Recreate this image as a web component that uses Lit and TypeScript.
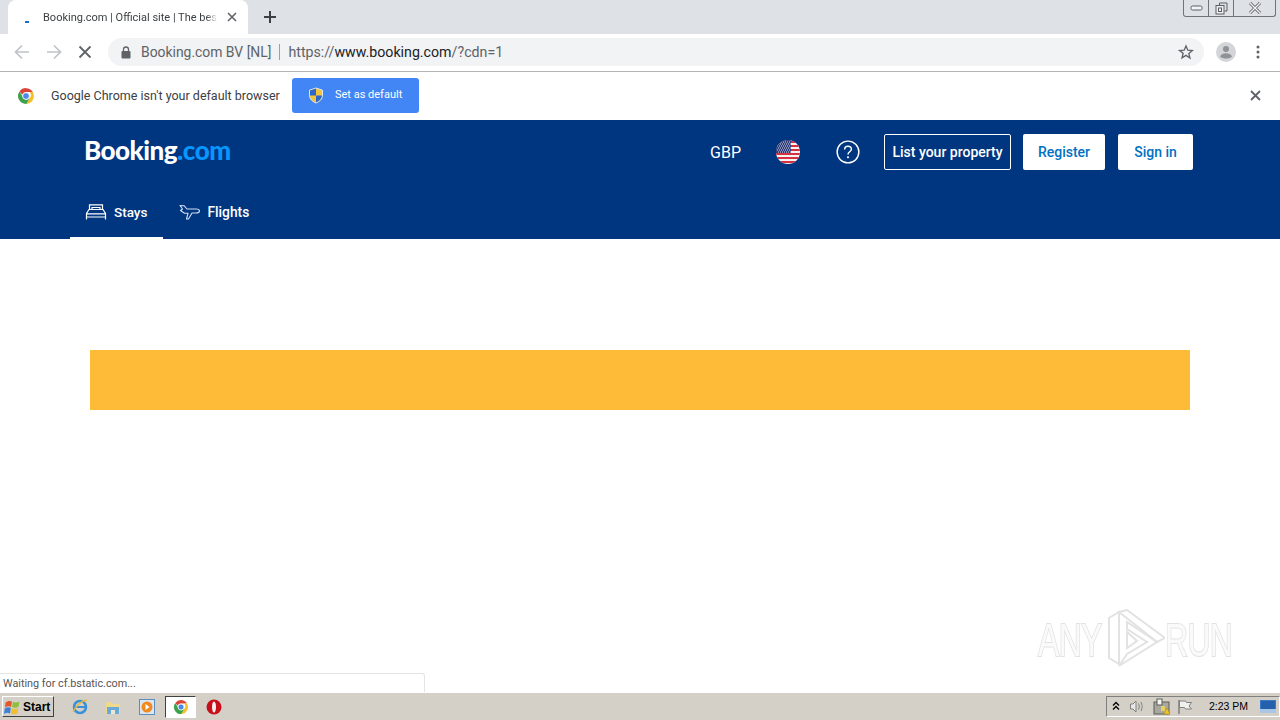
import { LitElement, html, css, svg } from "lit";
import { customElement } from "lit/decorators.js";

const chrome = (s: number) => html`<svg width=${s} height=${s} viewBox="0 0 48 48">
  <path d="M24 3a21 21 0 0 1 18.200 10.500H24a10.500 10.500 0 0 0-10 7L6.800 11.800A21 21 0 0 1 24 3z" fill="#db4437"/>
  <path d="M42.200 13.500A21 21 0 0 1 25 45l9-15.500a10.500 10.500 0 0 0-1-16z" fill="#f6c02c"/>
  <path d="M25 45A21 21 0 0 1 6.800 11.800l9 15.500A10.500 10.500 0 0 0 34 29.500z" fill="#3fa14a"/>
  <circle cx="24" cy="24" r="9" fill="#4a89e8" stroke="#f4f4f4" stroke-width="2.500"/>
</svg>`;

const stars: [number, number][] = [];
for (let y = 1.5; y < 12; y += 2) {
  for (let x = 1 + ((y - 1.5) / 2) % 2; x < 15; x += 2) stars.push([x, y]);
}

@customElement("app-root")
export class AppRoot extends LitElement {
  static styles = css`
    :host { display: block; width: 1280px; height: 720px; position: relative; overflow: hidden; background: #fff; font-family: Roboto, "Noto Sans", sans-serif; }
    .page { display: flex; flex-direction: column; height: 720px; }
    .tabstrip { height: 34px; background: #dee1e6; display: flex; position: relative; flex: none; padding-left: 8px; box-sizing: border-box; }
    .tab { width: 240px; height: 34px; background: #fff; border-radius: 8px 8px 0 0; display: flex; align-items: center; box-sizing: border-box; padding-left: 17px; position: relative; }
    .fav { width: 4px; height: 2px; background: #1a6fc0; margin-top: 9px; margin-right: 14px; flex: none; }
    .tabtitle { font-size: 11px; color: #3c4043; white-space: nowrap; width: 175px; line-height: 16px; margin-top: 2px; -webkit-mask-image: linear-gradient(to right, #000 163px, transparent 175px); mask-image: linear-gradient(to right, #000 163px, transparent 175px); }
    .tabclose { position: absolute; left: 219px; top: 12px; display: block; }
    .plus { margin: 10px 0 0 15px; display: block; }
    .winbtns { position: absolute; right: 4px; top: 0; width: 93px; height: 17px; box-sizing: border-box; border: 1px solid #6f7479; border-top: none; border-radius: 0 0 3px 3px; display: flex; }
    .winbtns > div { display: flex; align-items: center; justify-content: center; box-sizing: border-box; }
    .wb1 { width: 25px; border-right: 1px solid #6f7479; }
    .wb2 { width: 25px; border-right: 1px solid #6f7479; }
    .wb3 { flex: 1; }
    .toolbar { height: 38px; background: #fff; border-bottom: 1px solid #b4b4b4; padding-bottom: 1px; flex: none; display: flex; align-items: center; position: relative; box-sizing: border-box; }
    .navs { display: flex; align-items: center; width: 108px; padding-left: 13px; box-sizing: border-box; gap: 14px; flex: none; }
    .omni { width: 1096px; height: 28px; background: #f1f3f4; border-radius: 14px; display: flex; align-items: center; box-sizing: border-box; padding-left: 13px; position: relative; flex: none; font-size: 14.2px; color: #5f6368; white-space: nowrap; }
    .omni .org { margin-left: 10px; font-size: 13.9px; }
    .sep { width: 1px; height: 16px; background: #9aa0a6; margin: 0 8px; }
    .omni b { font-weight: 400; color: #202124; }
    .star { position: absolute; right: 10px; top: 6px; }
    .avatar { margin-left: 12px; display: block; flex: none; }
    .dots { margin-left: 20px; display: block; flex: none; }
    .infobar { height: 48px; background: #fff; flex: none; display: flex; align-items: center; padding-left: 17px; box-sizing: border-box; position: relative; font-size: 12.5px; color: #3c4043; }
    .infotext { margin-left: 16px; margin-bottom: 2px; white-space: nowrap; width: 241px; }
    .setdefault { width: 127px; height: 35px; background: #4285f4; border-radius: 3px; display: flex; align-items: center; box-sizing: border-box; padding-left: 16px; color: #fff; font-size: 11px; margin-bottom: 1px; gap: 11px; }
    .setdefault span { margin-bottom: 2px; }
    .infoclose { position: absolute; right: 19px; top: 18px; display: block; }
    .bk { height: 119px; background: #003580; flex: none; box-sizing: border-box; padding: 0 87px 0 70px; display: flex; flex-direction: column; }
    .bktop { height: 64px; display: flex; align-items: center; flex: none; }
    .logo { margin-left: 14px; font-family: "Lato", sans-serif; font-size: 26px; font-weight: 900; color: #fff; letter-spacing: -0.5px; margin-top: -4px; line-height: 30px; }
    .logo span { color: #0896ff; }
    .spacer { flex: 1; }
    .gbp { color: #fff; font-size: 16px; margin-right: 35px; }
    .flag { display: block; margin-right: 36px; }
    .help { display: block; margin-right: 24px; }
    .btn { height: 36px; box-sizing: border-box; display: flex; align-items: center; justify-content: center; font-size: 14px; font-weight: 500; border-radius: 2px; }
    .list { width: 127px; border: 1px solid #fff; color: #fff; margin-right: 12px; }
    .reg { width: 82px; background: #fff; color: #0071c2; margin-right: 13px; }
    .sign { width: 75px; background: #fff; color: #0071c2; }
    .bknav { display: flex; height: 55px; flex: none; }
    .navitem { display: flex; align-items: center; color: #fff; font-size: 13.8px; font-weight: 500; height: 55px; box-sizing: border-box; padding: 3px 15px 0 16px; gap: 7px; border-bottom: 2px solid transparent; }
    .navitem.active { border-bottom-color: #fff; font-size: 13.5px; padding: 3px 16px 0 15px; }
    .main { flex: 1; background: #fff; box-sizing: border-box; padding: 111px 90px 0; }
    .band { height: 60px; background: #febb38; }
    .taskbar { height: 28px; background: #d4d0c8; border-top: 1px solid #fff; box-sizing: border-box; flex: none; display: flex; align-items: center; position: relative; font-family: "Liberation Sans", sans-serif; }
    .start { width: 52px; height: 21px; margin-left: 2px; box-sizing: border-box; border: 1px solid; border-color: #fff #404040 #404040 #fff; display: flex; align-items: center; gap: 2px; padding-left: 1px; font-weight: 700; font-size: 12px; color: #000; background: #d4d0c8; }
    .tb { display: flex; align-items: center; justify-content: center; flex: none; }
    .tb-ie { margin-left: 17px; }
    .tb-folder { margin-left: 16px; }
    .tb-media { margin-left: 18px; }
    .tb-chrome { margin-left: 10px; width: 31px; height: 22px; background: #fff; border: 1px solid; border-color: #404040 #fff #fff #404040; box-sizing: border-box; }
    .tb-opera { margin-left: 10px; }
    .tray { position: absolute; right: 0; top: 3px; width: 174px; height: 21px; border: 1px solid; border-color: #808080 #fff #fff #808080; box-sizing: border-box; display: flex; align-items: center; font-size: 10.5px; color: #000; }
    .clock { position: absolute; left: 102px; top: 3px; }
    .tray svg { position: absolute; }
    .status { position: absolute; left: 0; top: 673px; width: 425px; height: 19px; background: #fff; border: 1px solid #e4e4e4; border-left: none; border-bottom: none; box-sizing: border-box; border-top-right-radius: 3px; font-size: 10.8px; color: #555; padding: 3px 0 0 3px; white-space: nowrap; }
    .wm { position: absolute; left: 1038px; top: 608px; display: flex; align-items: center; color: #fafafa; font-family: "Liberation Sans", sans-serif; font-size: 47px; line-height: 64px; letter-spacing: -1px; -webkit-text-stroke: 2px #e2e2e2; paint-order: stroke fill; }
    .wm span { display: block; transform: scaleX(0.68); transform-origin: left center; white-space: nowrap; }
    .wm .a { width: 67px; }
    .wm .r { width: 67px; }
    .wm svg { display: block; }
  `;

  render() {
    return html`
      <div class="page">
        <div class="tabstrip">
          <div class="tab">
            <div class="fav"></div>
            <div class="tabtitle">Booking.com | Official site | The best</div>
            <svg class="tabclose" width="10" height="10" viewBox="0 0 10 10"><path d="M1 1l8 8M9 1l-8 8" stroke="#5f6368" stroke-width="1.6"/></svg>
          </div>
          <svg class="plus" width="14" height="14" viewBox="0 0 14 14"><path d="M7 1v12M1 7h12" stroke="#3c4043" stroke-width="2"/></svg>
          <div class="winbtns">
            <div class="wb1"><svg width="13" height="6" viewBox="0 0 13 6"><rect x="1" y="1" width="11" height="4" rx="1.5" fill="#f4f5f6" stroke="#5a5e63"/></svg></div>
            <div class="wb2"><svg width="13" height="13" viewBox="0 0 13 13"><path d="M4.5 3V1h7.5v8H9.500" fill="none" stroke="#5a5e63"/><rect x="1" y="3.500" width="8" height="8.500" fill="#eef0f2" stroke="#5a5e63"/><rect x="3.500" y="6" width="3" height="3.500" fill="none" stroke="#5a5e63"/></svg></div>
            <div class="wb3"><svg width="14" height="12" viewBox="0 0 14 12"><path d="M2 1l10 10M12 1L2 11" stroke="#5a5e63" stroke-width="3"/><path d="M2 1l10 10M12 1L2 11" stroke="#f4f5f6" stroke-width="1.4"/></svg></div>
          </div>
        </div>
        <div class="toolbar">
          <div class="navs">
            <svg width="18" height="18" viewBox="0 0 18 18"><path d="M16 9H3M9 2.500L2.500 9 9 15.500" fill="none" stroke="#c0c3c7" stroke-width="1.7"/></svg>
            <svg width="18" height="18" viewBox="0 0 18 18"><path d="M2 9h13M9 2.500L15.500 9 9 15.500" fill="none" stroke="#c0c3c7" stroke-width="1.7"/></svg>
            <svg style="margin-left:1px" width="14" height="14" viewBox="0 0 14 14"><path d="M1.500 1.500l11 11M12.500 1.500l-11 11" stroke="#5f6368" stroke-width="1.8"/></svg>
          </div>
          <div class="omni">
            <svg width="10" height="13" viewBox="0 0 10 13"><path d="M2.500 5V3.500a2.500 2.500 0 0 1 5 0V5" fill="none" stroke="#5f6368" stroke-width="1.300"/><rect x="0.500" y="5" width="9" height="7.500" rx="1" fill="#5f6368"/></svg>
            <span class="org">Booking.com BV [NL]</span>
            <div class="sep"></div>
            <span>https://<b>www.booking.com</b>/?cdn=1</span>
            <svg class="star" width="16" height="16" viewBox="0 0 24 24"><path d="M12 3l2.700 6.300 6.800.6-5.200 4.500 1.600 6.700L12 17l-5.900 3.600 1.600-6.700L2.500 9.900l6.800-.6z" fill="none" stroke="#5f6368" stroke-width="2"/></svg>
          </div>
          <svg class="avatar" width="20" height="20" viewBox="0 0 20 20"><circle cx="10" cy="10" r="10" fill="#d3d5d8"/><circle cx="10" cy="7" r="3" fill="#8f9297"/><path d="M4 14.500c1-2.500 3.500-3.200 6-3.200s5 .7 6 3.200c-1.500 1.500-3.500 2-6 2s-4.500-.5-6-2z" fill="#8f9297"/></svg>
          <svg class="dots" width="4" height="14" viewBox="0 0 4 14"><circle cx="2" cy="2" r="1.500" fill="#5f6368"/><circle cx="2" cy="7" r="1.500" fill="#5f6368"/><circle cx="2" cy="12" r="1.500" fill="#5f6368"/></svg>
        </div>
        <div class="infobar">
          ${chrome(18)}
          <div class="infotext">Google Chrome isn't your default browser</div>
          <div class="setdefault">
            <svg width="16" height="17" viewBox="0 0 16 17"><path d="M8 1l6.500 2.200v5c0 3.800-2.800 6.300-6.500 7.800-3.700-1.500-6.500-4-6.500-7.800v-5z" fill="#f2c53d" stroke="#dfe6f2"/><path d="M8 1.500v7H2v-5zM8 8.500h6c-.3 3.400-2.700 5.600-6 7z" fill="#2f67c8"/></svg>
            <span>Set as default</span>
          </div>
          <svg class="infoclose" width="11" height="11" viewBox="0 0 11 11"><path d="M1 1l9 9M10 1l-9 9" stroke="#5f6368" stroke-width="1.800"/></svg>
        </div>
        <div class="bk">
          <div class="bktop">
            <div class="logo">Booking<span>.com</span></div>
            <div class="spacer"></div>
            <div class="gbp">GBP</div>
            <svg class="flag" width="24" height="24" viewBox="0 0 24 24">
              <defs><clipPath id="fc"><circle cx="12" cy="12" r="12"/></clipPath></defs>
              <g clip-path="url(#fc)">
                <rect width="24" height="24" fill="#f7f2f2"/>
                ${[1, 5, 9, 13, 17, 21].map((y) => svg`<rect x="0" y=${y} width="24" height="2" fill="#d5303f"/>`)}
                <rect width="15" height="13" fill="#2f3a78"/>
                ${stars.map(([x, y]) => svg`<rect x=${x} y=${y} width="1" height="1" fill="#d8dbe8"/>`)}
              </g>
            </svg>
            <svg class="help" width="24" height="24" viewBox="0 0 25 25"><circle cx="12.500" cy="12.500" r="11.300" fill="none" stroke="#fff" stroke-width="1.500"/><path d="M9 9.800c0-2 1.600-3.300 3.500-3.300s3.500 1.300 3.500 3.100c0 2.600-3.500 2.700-3.500 5.400" fill="none" stroke="#fff" stroke-width="1.500"/><circle cx="12.500" cy="18" r="1.100" fill="#fff"/></svg>
            <div class="btn list">List your property</div>
            <div class="btn reg">Register</div>
            <div class="btn sign">Sign in</div>
          </div>
          <div class="bknav">
            <div class="navitem active">
              <svg width="22" height="16" viewBox="0 0 22 16"><path d="M1.500 15.500v-6L4 5.500h14l2.500 4v6M1.500 9.800h19M1.500 13h19M4.500 5.500V.8h13v4.700M7 5.500V3.500h8v2" fill="none" stroke="#fff" stroke-width="1.200"/></svg>
              <span>Stays</span>
            </div>
            <div class="navitem">
              <svg width="21" height="16" viewBox="0 0 21 16"><path d="M1 1.500l4 .2 3 3.300h9c2 0 3.500 1 3.500 2s-1.500 2-3.500 2h-4l-3.500 6H7.500L9 9.300H5.500L1.500 6.500 3.500 5z" fill="none" stroke="#cfe0f5" stroke-width="1.100" stroke-linejoin="round"/></svg>
              <span>Flights</span>
            </div>
          </div>
        </div>
        <div class="main"><div class="band"></div></div>
        <div class="taskbar">
          <div class="start">
            <svg width="17" height="16" viewBox="0 0 16 16"><path d="M1 3.500C3 2 5 1.500 7.500 2.500L6.500 8C4.500 7 2.500 7.200.5 8.500z" fill="#e2572b"/><path d="M8.500 2.800c2 1 4 1 6.500-.3L14 7.800c-2.500 1.300-4.500 1.200-6.500.3z" fill="#8fbf3c"/><path d="M.3 9.500c2-1.300 4-1.500 6-.5L5.500 14.500c-2-1-4-.8-6 .5z" fill="#3f7fd6"/><path d="M7.300 9.300c2 1 4 1 6.500-.3L13 14.200c-2.500 1.300-4.500 1.300-6.500.3z" fill="#f0c030"/></svg>
            Start
          </div>
          <div class="tb tb-ie"><svg width="18" height="18" viewBox="0 0 18 18"><circle cx="9" cy="9" r="6" fill="none" stroke="#3a90d8" stroke-width="2.500"/><path d="M4 9h10" stroke="#3a90d8" stroke-width="2"/><path d="M2 14c3-6 8-11 14-12" fill="none" stroke="#e8b93a" stroke-width="1.300"/></svg></div>
          <div class="tb tb-folder"><svg width="16" height="16" viewBox="0 0 16 16"><path d="M1 3h5l1 2h8v10H1z" fill="#f0d98a"/><rect x="2" y="8" width="12" height="7" fill="#6aa9d8"/><rect x="6" y="11" width="4" height="4" fill="#e9e6d6"/></svg></div>
          <div class="tb tb-media"><svg width="16" height="16" viewBox="0 0 16 16"><rect x="0.500" y="0.500" width="15" height="15" fill="#dbe6f0" stroke="#5c8ec4"/><circle cx="8" cy="8" r="5.500" fill="#f08a20"/><path d="M6.500 5l4 3-4 3z" fill="#fff"/></svg></div>
          <div class="tb tb-chrome">${chrome(16)}</div>
          <div class="tb tb-opera"><svg width="16" height="16" viewBox="0 0 16 16"><circle cx="8" cy="8" r="7.500" fill="#c8101a"/><ellipse cx="8" cy="8" rx="2" ry="5.500" fill="#f4f0ec"/></svg></div>
          <div class="tray">
            <svg style="left:5px;top:4px" width="8" height="10" viewBox="0 0 8 10"><path d="M1 4.500L4 1.500l3 3M1 8.500l3-3 3 3" fill="none" stroke="#000" stroke-width="1.300"/></svg>
            <svg style="left:22px;top:2px" width="16" height="15" viewBox="0 0 16 15"><path d="M1.500 5h2.500l3-3v11l-3-3H1.500z" fill="#e8e8e8" stroke="#808080"/><path d="M9.500 4.500c1 2 1 4 0 6M12 3c1.500 3 1.500 6 0 9" fill="none" stroke="#808080"/></svg>
            <svg style="left:46px;top:1px" width="18" height="17" viewBox="0 0 18 17"><rect x="1" y="4" width="15" height="12" fill="#a8a8a0" stroke="#5c5c56"/><rect x="4" y="1" width="5" height="6" fill="#f4f4f0" stroke="#5c5c56"/><path d="M11 16l3-6 3 6z" fill="#f2c61f" stroke="#a8860a" stroke-width="0.500"/><rect x="8" y="8" width="4" height="5" fill="#e8d060"/></svg>
            <svg style="left:70px;top:2px" width="16" height="15" viewBox="0 0 16 15"><path d="M2 1v14" stroke="#707070" stroke-width="1.300"/><path d="M2.500 2h6l1 1.500h5L12 7l2.500 3h-6l-1-1.500h-5z" fill="#f0f0ec" stroke="#808080"/></svg>
            <span class="clock">2:23 PM</span>
            <svg style="left:153px;top:3px" width="16" height="13" viewBox="0 0 16 13"><rect width="16" height="13" fill="#3a78c8"/><rect y="9" width="16" height="4" fill="#a9c6e6"/><rect x="1" y="1" width="14" height="8" fill="#2560ac"/></svg>
          </div>
        </div>
      </div>
      <div class="status">Waiting for cf.bstatic.com...</div>
      <div class="wm">
        <span class="a">ANY</span>
        <svg width="60" height="64" viewBox="0 0 60 64">
          <g fill="none" stroke="#e2e2e2" stroke-width="2">
            <path d="M4 10l10-6v52l-10-6z"/>
            <path d="M14 4l8-2 38 28-8 4z"/>
            <path d="M22 14l30 20-38 24 8-12 20-12-20-13z"/>
            <path d="M22 24l10 9-10 7z"/>
          </g>
        </svg>
        <span class="r">RUN</span>
      </div>
    `;
  }
}
